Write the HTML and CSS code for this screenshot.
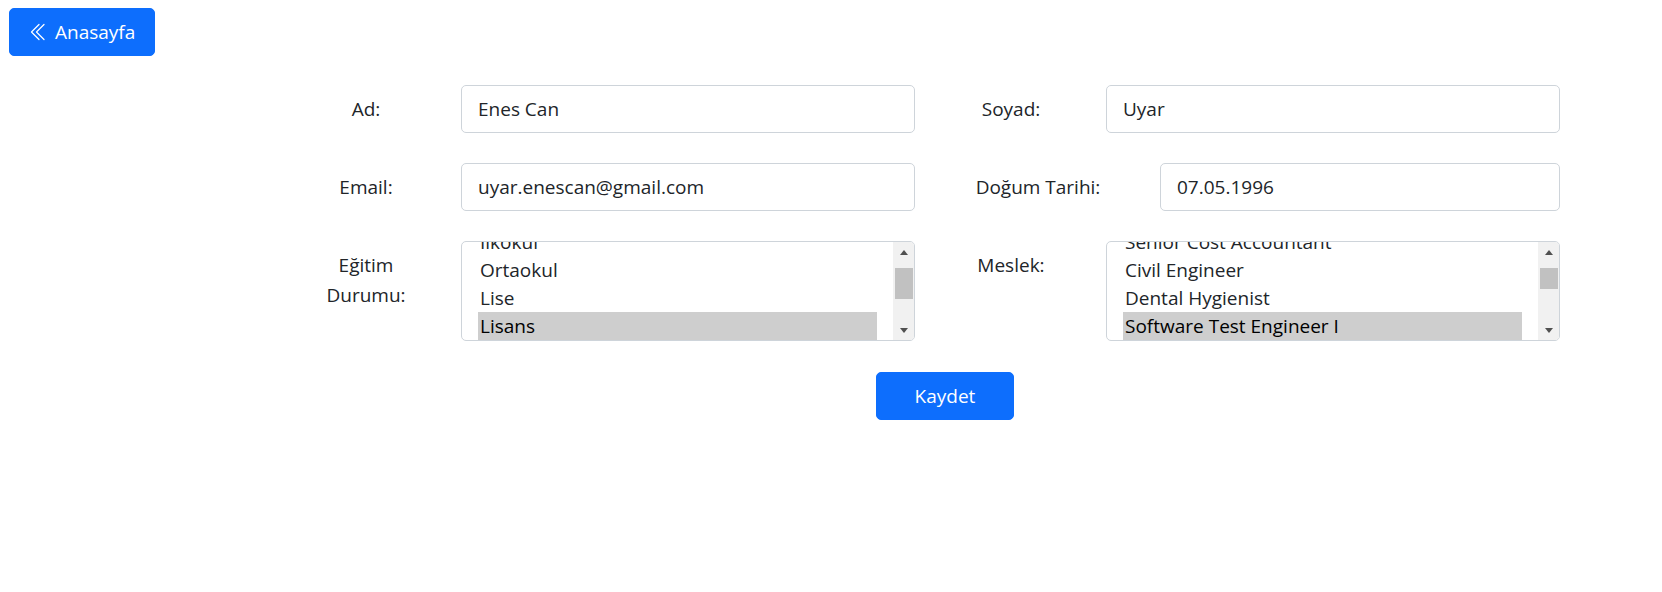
FILE: index.html
```html
<!DOCTYPE html>
<html lang="tr">
<head>
<meta charset="utf-8">
<title>Kişi Düzenle</title>
<link rel="stylesheet" href="styles.css">
</head>
<body>
<header class="topbar">
  <a class="btn btn-home" href="#">
    <svg class="icon" viewBox="0 0 16 16" width="20" height="20" aria-hidden="true">
      <path fill="currentColor" fill-rule="evenodd" d="M8.354 1.646a.5.5 0 0 1 0 .708L2.707 8l5.647 5.646a.5.5 0 0 1-.708.708l-6-6a.5.5 0 0 1 0-.708l6-6a.5.5 0 0 1 .708 0z"/>
      <path fill="currentColor" fill-rule="evenodd" d="M12.354 1.646a.5.5 0 0 1 0 .708L6.707 8l5.647 5.646a.5.5 0 0 1-.708.708l-6-6a.5.5 0 0 1 0-.708l6-6a.5.5 0 0 1 .708 0z"/>
    </svg>
    <span>Anasayfa</span>
  </a>
</header>

<form class="form">
  <div class="grid">
    <div class="field">
      <label class="lbl">Ad:</label>
      <input class="control" type="text" value="Enes Can">
    </div>
    <div class="field">
      <label class="lbl">Soyad:</label>
      <input class="control" type="text" value="Uyar">
    </div>
    <div class="field">
      <label class="lbl">Email:</label>
      <input class="control" type="text" value="uyar.enescan@gmail.com">
    </div>
    <div class="field">
      <label class="lbl lbl-wide">Doğum Tarihi:</label>
      <input class="control" type="text" value="07.05.1996">
    </div>
    <div class="field">
      <label class="lbl">Eğitim Durumu:</label>
      <div class="listbox" role="listbox">
        <div class="listbox-view">
          <div class="opt">İlkokul</div>
          <div class="opt">Ortaokul</div>
          <div class="opt">Lise</div>
          <div class="opt selected">Lisans</div>
        </div>
        <div class="scrollbar">
          <span class="sb-btn"><span class="arrow-up"></span></span>
          <span class="sb-track"><span class="thumb" style="height:31px"></span></span>
          <span class="sb-btn"><span class="arrow-down"></span></span>
        </div>
      </div>
    </div>
    <div class="field">
      <label class="lbl">Meslek:</label>
      <div class="listbox" role="listbox">
        <div class="listbox-view">
          <div class="opt">Senior Cost Accountant</div>
          <div class="opt">Civil Engineer</div>
          <div class="opt">Dental Hygienist</div>
          <div class="opt selected">Software Test Engineer I</div>
        </div>
        <div class="scrollbar">
          <span class="sb-btn"><span class="arrow-up"></span></span>
          <span class="sb-track"><span class="thumb" style="height:21px"></span></span>
          <span class="sb-btn"><span class="arrow-down"></span></span>
        </div>
      </div>
    </div>
  </div>
  <div class="actions">
    <button class="btn btn-save" type="button">Kaydet</button>
  </div>
</form>
</body>
</html>
```
FILE: styles.css
```css
* { box-sizing: border-box; }

body {
  margin: 0;
  background: #fff;
  color: #212529;
  font-family: "Open Sans", "Noto Sans", "Liberation Sans", sans-serif;
  font-size: 19px;
}

.topbar {
  padding: 8px 0 0 9px;
}

.btn {
  display: inline-flex;
  align-items: center;
  justify-content: center;
  height: 48px;
  border: 1px solid #0d6efd;
  border-radius: 5px;
  background: #0d6efd;
  color: #fff;
  font-family: inherit;
  font-size: 19px;
  text-decoration: none;
  cursor: pointer;
}

.btn-home {
  padding: 0 19px;
  gap: 6px;
}

.btn-home .icon {
  display: block;
}

.form {
  width: 1290px;
  margin: 29px 0 0 300px;
}

.grid {
  display: grid;
  grid-template-columns: 615px 615px;
  column-gap: 30px;
  row-gap: 30px;
}

.field {
  display: flex;
  align-items: flex-start;
}

.lbl {
  flex: none;
  width: 132px;
  margin-right: 29px;
  padding-top: 9px;
  line-height: 30px;
  text-align: center;
}

.lbl-wide {
  width: 186px;
}

.control {
  flex: 1;
  min-width: 0;
  height: 48px;
  padding: 0 16px;
  border: 1px solid #ced4da;
  border-radius: 5px;
  background: #fff;
  color: #212529;
  font-family: inherit;
  font-size: 19px;
  outline: none;
}

.listbox {
  flex: 1;
  min-width: 0;
  height: 100px;
  display: flex;
  border: 1px solid #ced4da;
  border-radius: 5px;
  background: #fff;
  overflow: hidden;
}

.listbox-view {
  flex: 1;
  min-width: 0;
  padding: 0 16px;
  display: flex;
  flex-direction: column;
  justify-content: flex-end;
  overflow: hidden;
}

.opt {
  flex: none;
  height: 28px;
  line-height: 28px;
  padding-left: 2px;
  white-space: nowrap;
  color: #212529;
}

.opt.selected {
  background: #cecece;
  color: #000;
}

.scrollbar {
  flex: none;
  width: 21px;
  display: flex;
  flex-direction: column;
  background: #f1f1f1;
}

.sb-btn {
  flex: none;
  height: 20px;
  display: flex;
  align-items: center;
  justify-content: center;
}

.sb-track {
  flex: 1;
  padding: 6px 1px 0 2px;
}

.thumb {
  display: block;
  background: #c1c1c1;
}

.arrow-up {
  width: 0;
  height: 0;
  border-left: 4.5px solid transparent;
  border-right: 4.5px solid transparent;
  border-bottom: 5px solid #505050;
}

.arrow-down {
  width: 0;
  height: 0;
  border-left: 4.5px solid transparent;
  border-right: 4.5px solid transparent;
  border-top: 5px solid #505050;
}

.actions {
  display: flex;
  justify-content: center;
  margin-top: 31px;
}

.btn-save {
  width: 138px;
}
```
